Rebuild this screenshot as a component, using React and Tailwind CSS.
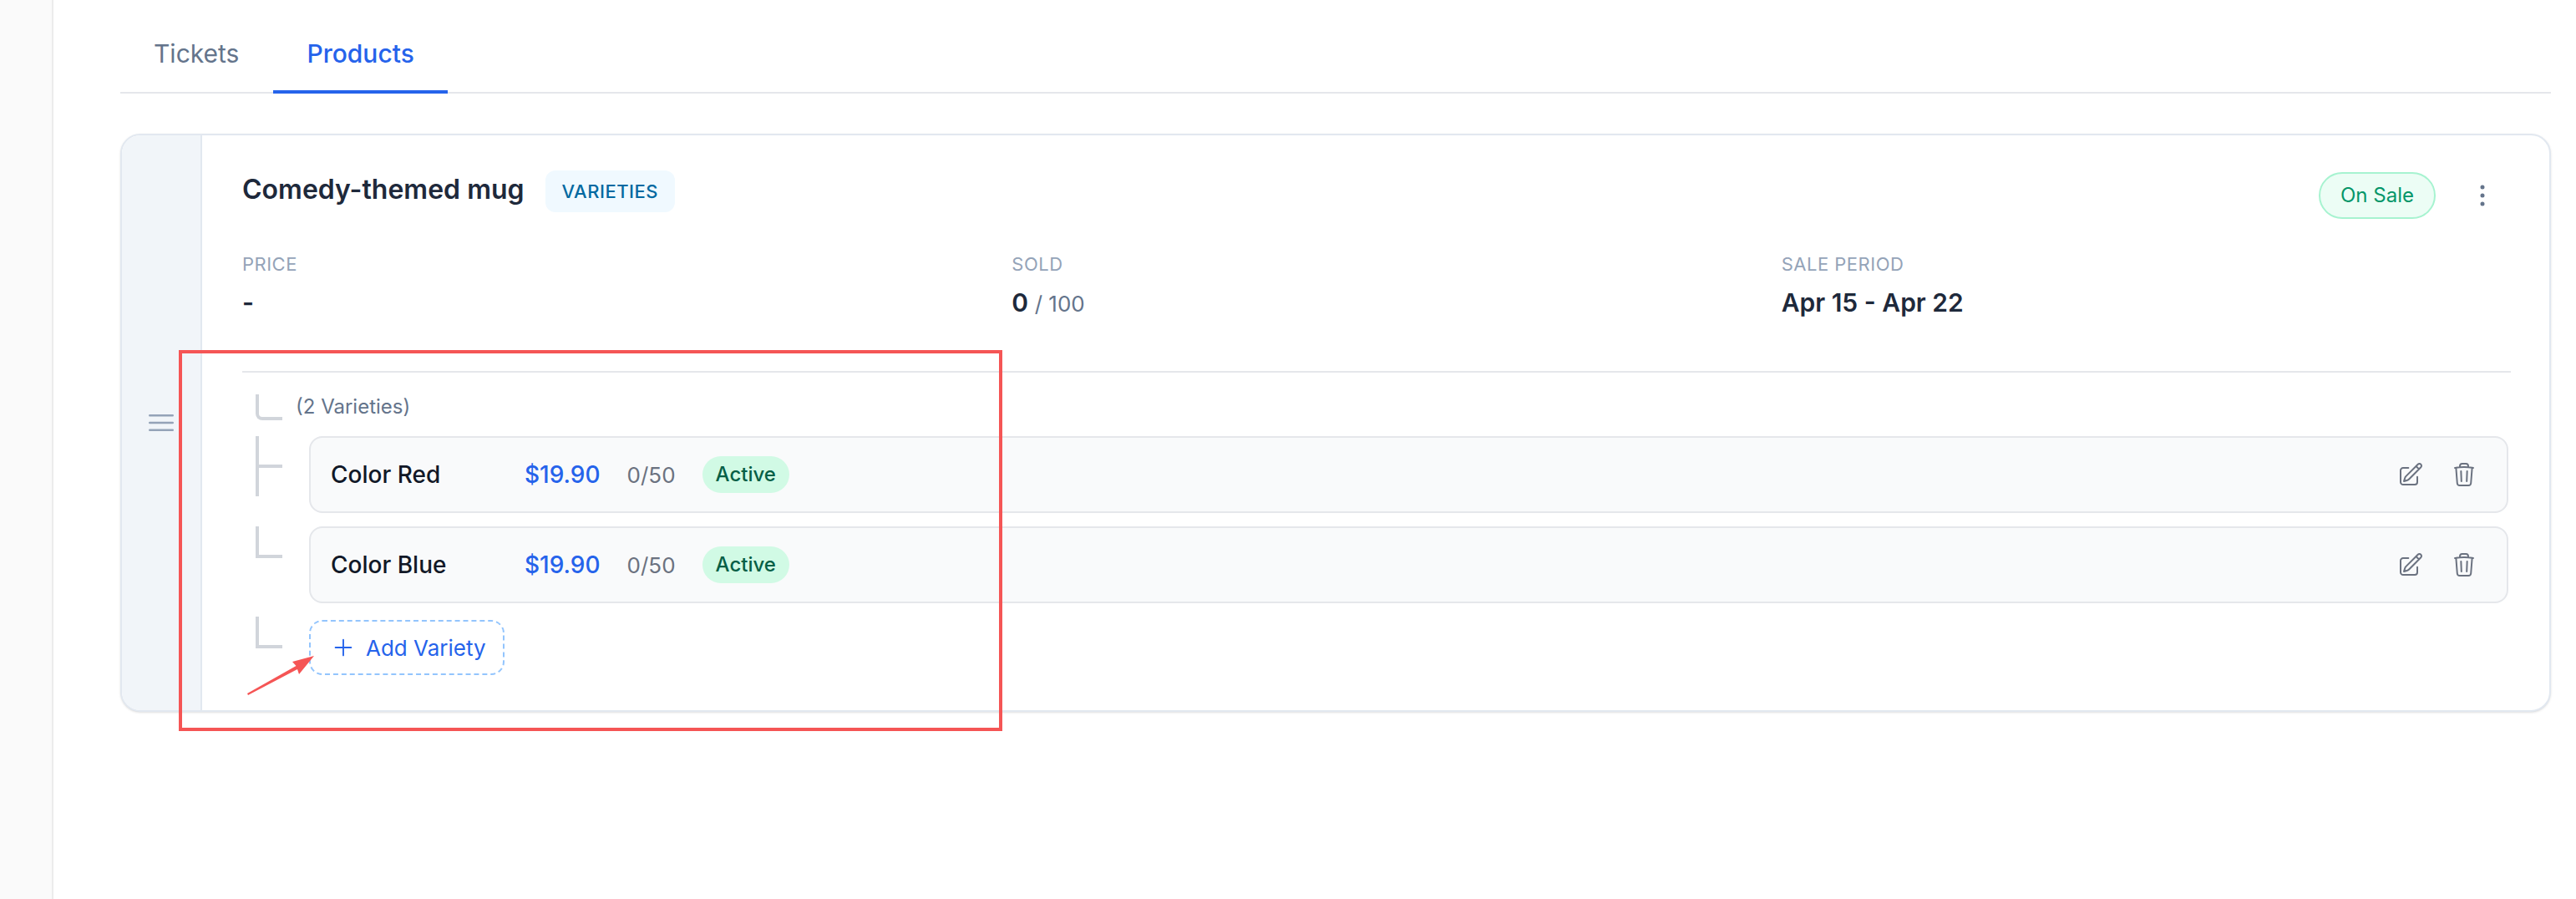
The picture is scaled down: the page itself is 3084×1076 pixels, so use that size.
import React from 'react';
import {
  HiOutlineBars3,
  HiOutlineEllipsisVertical,
  HiOutlinePencilSquare,
  HiOutlinePlus,
  HiOutlineTrash,
} from 'react-icons/hi2';

const VARIETIES = [
  { name: 'Color Red', tee: true },
  { name: 'Color Blue', tee: false },
];

const Elbow = () => (
  <div className="ml-4 h-[38px] w-8 shrink-0 border-b-4 border-l-4 border-[#d1d5db]" />
);

const Tee = () => (
  <div className="ml-4 h-[72px] w-8 shrink-0 border-l-4 border-[#d1d5db] pt-[34px]">
    <div className="h-1 w-7 bg-[#d1d5db]" />
  </div>
);

const Stat = ({ label, children }) => (
  <div>
    <div className="text-[22px] leading-[28px] tracking-[0.5px] text-[#94a3b8]">{label}</div>
    <div className="mt-[14px] h-[36px] text-[30px] leading-[36px] font-semibold text-[#1e293b]">{children}</div>
  </div>
);

const VarietyRow = ({ name, tee }) => (
  <div className="mt-4 flex first:mt-0">
    {tee ? <Tee /> : <Elbow />}
    <div className="ml-8 mr-[3px] flex h-[92px] flex-1 items-center rounded-2xl border-2 border-[#e5e7eb] bg-[#f9fafb] pl-6 pr-[35px]">
      <span className="w-[200px] text-[28px] font-medium text-[#111827]">{name}</span>
      <span className="ml-8 text-[28px] font-medium text-[#2563eb]">$19.90</span>
      <span className="ml-8 text-[26px] text-[#6b7280]">0/50</span>
      <span className="ml-8 flex h-[44px] items-center rounded-full bg-[#d1fae5] px-4 text-[24px] font-medium text-[#065f46]">
        Active
      </span>
      <div className="ml-auto flex items-center gap-8 text-[#6b7280]">
        <HiOutlinePencilSquare size={32} />
        <HiOutlineTrash size={32} />
      </div>
    </div>
  </div>
);

export default function App() {
  return (
    <div className="relative flex h-[1076px] overflow-hidden bg-white font-['Inter',sans-serif] antialiased">
      <div className="w-[64px] shrink-0 border-r-2 border-[#ececec] bg-[#fafafa]" />

      <div className="flex-1 pl-20 pr-[30px] pt-4">
        {/* Tabs */}
        <div className="flex border-b-2 border-[#e5e7eb]">
          <div className="pb-[26px] pl-10 pr-[41px] pt-[30px] text-[30px] leading-[36px] text-[#64748b]">Tickets</div>
          <div className="-mb-[2px] border-b-4 border-[#2563eb] px-10 pb-[26px] pt-[30px] text-[30px] leading-[36px] font-medium text-[#2563eb]">
            Products
          </div>
        </div>

        {/* Product card */}
        <div className="mt-12 flex overflow-hidden rounded-3xl border-2 border-[#e2e8f0] bg-white shadow-sm">
          <div className="flex w-[96px] shrink-0 items-center justify-center border-r-2 border-[#e2e8f0] bg-[#f1f5f9] text-[#94a3b8]">
            <HiOutlineBars3 size={40} />
          </div>

          <div className="flex-1 pb-[42px] pl-12 pr-[46px] pt-[42px]">
            <div className="flex items-start justify-between">
              <div className="flex items-center gap-[25px]">
                <h2 className="-mt-[4px] text-[32px] leading-[40px] font-semibold text-[#1e293b]">Comedy-themed mug</h2>
                <span className="flex h-[50px] items-center rounded-xl bg-[#f0f9ff] px-5 text-[22px] font-medium tracking-[0.5px] text-[#0369a1]">
                  VARIETIES
                </span>
              </div>
              <div className="mt-[2px] flex items-center gap-9 pr-[14px]">
                <span className="flex h-[56px] w-[140px] items-center justify-center rounded-full border-2 border-[#a7f3d0] bg-[#ecfdf5] text-[24px] text-[#059669]">
                  On Sale
                </span>
                <HiOutlineEllipsisVertical size={40} className="text-[#64748b]" />
              </div>
            </div>

            <div className="mt-[40px] grid grid-cols-3 gap-12">
              <Stat label="PRICE">-</Stat>
              <Stat label="SOLD">
                0 <span className="text-[26px] font-normal text-[#64748b]">/ 100</span>
              </Stat>
              <Stat label="SALE PERIOD">Apr 15 - Apr 22</Stat>
            </div>

            <div className="mt-[64px] border-t-2 border-[#e5e7eb]" />

            {/* Variety tree */}
            <div className="mt-[26px] flex items-start">
              <div className="ml-4 h-[31px] w-8 rounded-bl-lg border-b-4 border-l-4 border-[#d1d5db]" />
              <span className="ml-4 text-[24px] leading-[30px] text-[#64748b]">(2 Varieties)</span>
            </div>
            <div className="mt-[19px]">
              {VARIETIES.map((v) => (
                <VarietyRow key={v.name} name={v.name} tee={v.tee} />
              ))}
            </div>
            <div className="mt-4 flex">
              <Elbow />
              <button className="ml-8 mt-1 flex h-[66px] w-[234px] items-center gap-3 rounded-2xl border-2 border-dashed border-[#93c5fd] pl-6 text-[26px] text-[#2563eb]">
                <HiOutlinePlus size={30} />
                Add Variety
              </button>
            </div>
          </div>
        </div>
      </div>

      {/* Red annotation over the screenshot */}
      <div className="absolute left-[214px] top-[419px] h-[456px] w-[986px] border-4 border-[#f55555]" />
      <svg className="absolute left-[290px] top-[780px]" width="92" height="56" viewBox="0 0 92 56" fill="#f55555">
        <path d="M6 50 L64.5 17 L60 12 L86 5 L68 27 L66 21 L7 52 Z" />
      </svg>
    </div>
  );
}
